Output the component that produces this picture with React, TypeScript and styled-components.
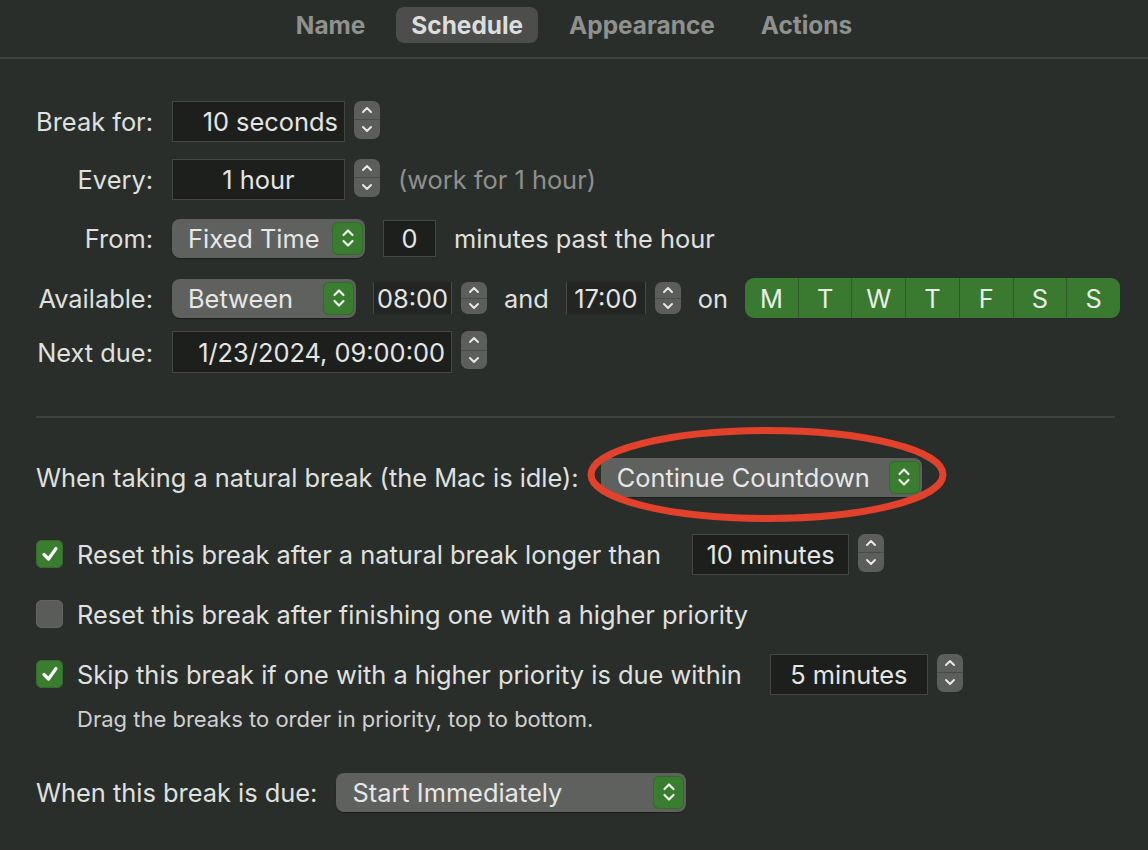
import React from "react";
import styled, { createGlobalStyle } from "styled-components";

const GlobalStyle = createGlobalStyle`
  html, body {
    margin: 0;
    background: #2a2e2b;
  }
  body {
    font-family: Inter, "Noto Sans", sans-serif;
    color: #dfe0df;
    -webkit-font-smoothing: antialiased;
  }
`;

const Window = styled.div`
  min-height: 850px;
  font-size: 25.4px;
`;

const TabBar = styled.div`
  display: flex;
  justify-content: center;
  gap: 16px;
  height: 59px;
  box-sizing: border-box;
  padding-top: 7px;
  border-bottom: 2px solid #3f433f;
`;

const Tab = styled.div<{ $active?: boolean }>`
  height: 36px;
  line-height: 36px;
  padding: 0 15px;
  border-radius: 8px;
  font-size: 24.4px;
  font-weight: 700;
  color: ${({ $active }) => ($active ? "#dcdddc" : "#8f918e")};
  background: ${({ $active }) => ($active ? "#4b4e4b" : "transparent")};
`;

const Content = styled.div`
  padding: 33px 33px 0 36px;
`;

const FormRow = styled.div<{ $h: number }>`
  display: grid;
  grid-template-columns: 117px 1fr;
  column-gap: 19px;
  align-items: center;
  height: ${({ $h }) => $h}px;
`;

const Label = styled.div`
  text-align: right;
  white-space: nowrap;
`;

const Controls = styled.div<{ $gap?: number }>`
  display: flex;
  align-items: center;
  gap: ${({ $gap }) => $gap ?? 18}px;
  white-space: nowrap;
`;

const SpinGroup = styled.div`
  display: flex;
  align-items: flex-start;
  gap: 9px;
`;

const Field = styled.div<{ $w: number; $h?: number; $align?: string }>`
  box-sizing: border-box;
  width: ${({ $w }) => $w}px;
  height: ${({ $h }) => $h ?? 41}px;
  display: flex;
  align-items: center;
  justify-content: ${({ $align }) => $align ?? "center"};
  padding: 0 6px;
  background: #1d1f1d;
  border: 1px solid #444744;
  color: #e4e5e4;
`;

const TimeField = styled(Field)`
  border: none;
  border-left: 1px solid #474a47;
  border-right: 1px solid #474a47;
  background: #222522;
  padding: 0 1px;
`;

const Dim = styled.span`
  color: #8e908d;
`;

const StepperBox = styled.div<{ $h: number }>`
  width: 26px;
  height: ${({ $h }) => $h}px;
  display: flex;
  flex-direction: column;
  border-radius: 7px;
  background: #5c5e5b;
  overflow: hidden;
`;

const StepHalf = styled.div<{ $lower?: boolean }>`
  flex: 1;
  display: flex;
  align-items: center;
  justify-content: center;
  border-top: ${({ $lower }) => ($lower ? "1px solid #4a4c4a" : "none")};
`;

const Chevron = ({ down }: { down?: boolean }) => (
  <svg width="12" height="8" viewBox="0 0 12 8">
    <path
      d={down ? "M2 2 L6 6 L10 2" : "M2 6 L6 2 L10 6"}
      fill="none"
      stroke="#e6e7e6"
      strokeWidth="2"
      strokeLinecap="round"
      strokeLinejoin="round"
    />
  </svg>
);

const Stepper = ({ h = 38 }: { h?: number }) => (
  <StepperBox $h={h}>
    <StepHalf>
      <Chevron />
    </StepHalf>
    <StepHalf $lower>
      <Chevron down />
    </StepHalf>
  </StepperBox>
);

const PopupBox = styled.div<{ $w: number }>`
  box-sizing: border-box;
  width: ${({ $w }) => $w}px;
  height: 39px;
  display: flex;
  align-items: center;
  justify-content: space-between;
  padding: 0 2px 0 16px;
  border-radius: 8px;
  background: #5f615e;
  box-shadow: 0 1px 1px rgba(0, 0, 0, 0.35);
  color: #e6e7e6;
  white-space: nowrap;
`;

const Knob = styled.div`
  width: 31px;
  height: 33px;
  border-radius: 6px;
  background: #3b7d30;
  box-shadow: inset 0 0 0 1px #336b29;
  display: flex;
  align-items: center;
  justify-content: center;
`;

const Popup = ({ w, children }: { w: number; children: React.ReactNode }) => (
  <PopupBox $w={w}>
    <span>{children}</span>
    <Knob>
      <svg width="14" height="24" viewBox="0 0 14 24">
        <path
          d="M2.5 9 L7 4.5 L11.5 9 M2.5 15 L7 19.5 L11.5 15"
          fill="none"
          stroke="#eef2ed"
          strokeWidth="2.2"
          strokeLinecap="round"
          strokeLinejoin="round"
        />
      </svg>
    </Knob>
  </PopupBox>
);

const DayStrip = styled.div`
  display: flex;
  width: 375px;
  height: 40px;
  border-radius: 9px;
  overflow: hidden;
  background: #3a7a30;
`;

const Day = styled.div`
  flex: 1;
  display: flex;
  align-items: center;
  justify-content: center;
  color: #e8ede7;
  & + & {
    border-left: 1px solid #2c5d25;
  }
`;

const Divider = styled.div`
  height: 2px;
  margin-top: 40px;
  background: #3e423e;
`;

const Section = styled.div`
  padding-top: 30px;
`;

const NaturalRow = styled.div`
  display: flex;
  align-items: center;
  gap: 22px;
  height: 58px;
  white-space: nowrap;
`;

const Highlight = styled.div`
  position: relative;
`;

const Ring = styled.svg`
  position: absolute;
  left: -14px;
  top: -31px;
  pointer-events: none;
`;

const CheckList = styled.div`
  display: flex;
  flex-direction: column;
  margin-top: 18px;
`;

const CheckRow = styled.div`
  display: flex;
  align-items: center;
  height: 60px;
  white-space: nowrap;
`;

const Box = styled.div<{ $on?: boolean }>`
  width: 27px;
  height: 28px;
  margin-right: 14px;
  border-radius: 6px;
  background: ${({ $on }) => ($on ? "#3b7d30" : "#5a5c59")};
  box-shadow: inset 0 0 0 1px ${({ $on }) => ($on ? "#336b29" : "#626461")};
  display: flex;
  align-items: center;
  justify-content: center;
`;

const Trailing = styled.div<{ $gap: number }>`
  margin-left: ${({ $gap }) => $gap}px;
`;

const Hint = styled.div`
  height: 30px;
  line-height: 30px;
  padding-left: 41px;
  font-size: 22px;
  color: #cfd0cf;
`;

const BottomRow = styled.div`
  display: flex;
  align-items: center;
  gap: 19px;
  height: 58px;
  margin-top: 29px;
`;

const Checkbox = ({ on }: { on?: boolean }) => (
  <Box $on={on}>
    {on && (
      <svg width="20" height="20" viewBox="0 0 20 20">
        <path
          d="M4 10.5 L8.5 15 L16 4.5"
          fill="none"
          stroke="#ffffff"
          strokeWidth="3.2"
          strokeLinecap="round"
          strokeLinejoin="round"
        />
      </svg>
    )}
  </Box>
);

const days = ["M", "T", "W", "T", "F", "S", "S"];

export default function App() {
  return (
    <Window>
      <GlobalStyle />
      <TabBar>
        <Tab>Name</Tab>
        <Tab $active>Schedule</Tab>
        <Tab>Appearance</Tab>
        <Tab>Actions</Tab>
      </TabBar>

      <Content>
        <FormRow $h={58}>
          <Label>Break for:</Label>
          <Controls>
            <SpinGroup>
              <Field $w={173} $align="flex-end">
                10 seconds
              </Field>
              <Stepper />
            </SpinGroup>
          </Controls>
        </FormRow>

        <FormRow $h={58}>
          <Label>Every:</Label>
          <Controls>
            <SpinGroup>
              <Field $w={173}>1 hour</Field>
              <Stepper />
            </SpinGroup>
            <Dim>(work for 1 hour)</Dim>
          </Controls>
        </FormRow>

        <FormRow $h={60}>
          <Label>From:</Label>
          <Controls>
            <Popup w={193}>Fixed Time</Popup>
            <Field $w={53} $h={37}>
              0
            </Field>
            <span>minutes past the hour</span>
          </Controls>
        </FormRow>

        <FormRow $h={60}>
          <Label>Available:</Label>
          <Controls $gap={17}>
            <Popup w={184}>Between</Popup>
            <SpinGroup>
              <TimeField $w={79} $h={32}>
                08:00
              </TimeField>
              <Stepper h={32} />
            </SpinGroup>
            <span>and</span>
            <SpinGroup>
              <TimeField $w={80} $h={32}>
                17:00
              </TimeField>
              <Stepper h={32} />
            </SpinGroup>
            <span>on</span>
            <DayStrip>
              {days.map((d, i) => (
                <Day key={i}>{d}</Day>
              ))}
            </DayStrip>
          </Controls>
        </FormRow>

        <FormRow $h={48}>
          <Label>Next due:</Label>
          <Controls>
            <SpinGroup>
              <Field $w={280} $h={42} $align="flex-end">
                1/23/2024, 09:00:00
              </Field>
              <Stepper />
            </SpinGroup>
          </Controls>
        </FormRow>

        <Divider />

        <Section>
          <NaturalRow>
            <span>When taking a natural break (the Mac is idle):</span>
            <Highlight>
              <Popup w={321}>Continue Countdown</Popup>
              <Ring width="360" height="96" viewBox="0 0 360 96">
                <ellipse
                  cx="180"
                  cy="47.5"
                  rx="176"
                  ry="44"
                  fill="none"
                  stroke="#e2412b"
                  strokeWidth="7"
                />
              </Ring>
            </Highlight>
          </NaturalRow>

          <CheckList>
            <CheckRow>
              <Checkbox on />
              <span>Reset this break after a natural break longer than</span>
              <Trailing $gap={31}>
                <SpinGroup>
                  <Field $w={157}>10 minutes</Field>
                  <Stepper />
                </SpinGroup>
              </Trailing>
            </CheckRow>
            <CheckRow>
              <Checkbox />
              <span>Reset this break after finishing one with a higher priority</span>
            </CheckRow>
            <CheckRow>
              <Checkbox on />
              <span>Skip this break if one with a higher priority is due within</span>
              <Trailing $gap={28}>
                <SpinGroup>
                  <Field $w={158}>5 minutes</Field>
                  <Stepper />
                </SpinGroup>
              </Trailing>
            </CheckRow>
          </CheckList>
          <Hint>Drag the breaks to order in priority, top to bottom.</Hint>

          <BottomRow>
            <span>When this break is due:</span>
            <Popup w={350}>Start Immediately</Popup>
          </BottomRow>
        </Section>
      </Content>
    </Window>
  );
}
